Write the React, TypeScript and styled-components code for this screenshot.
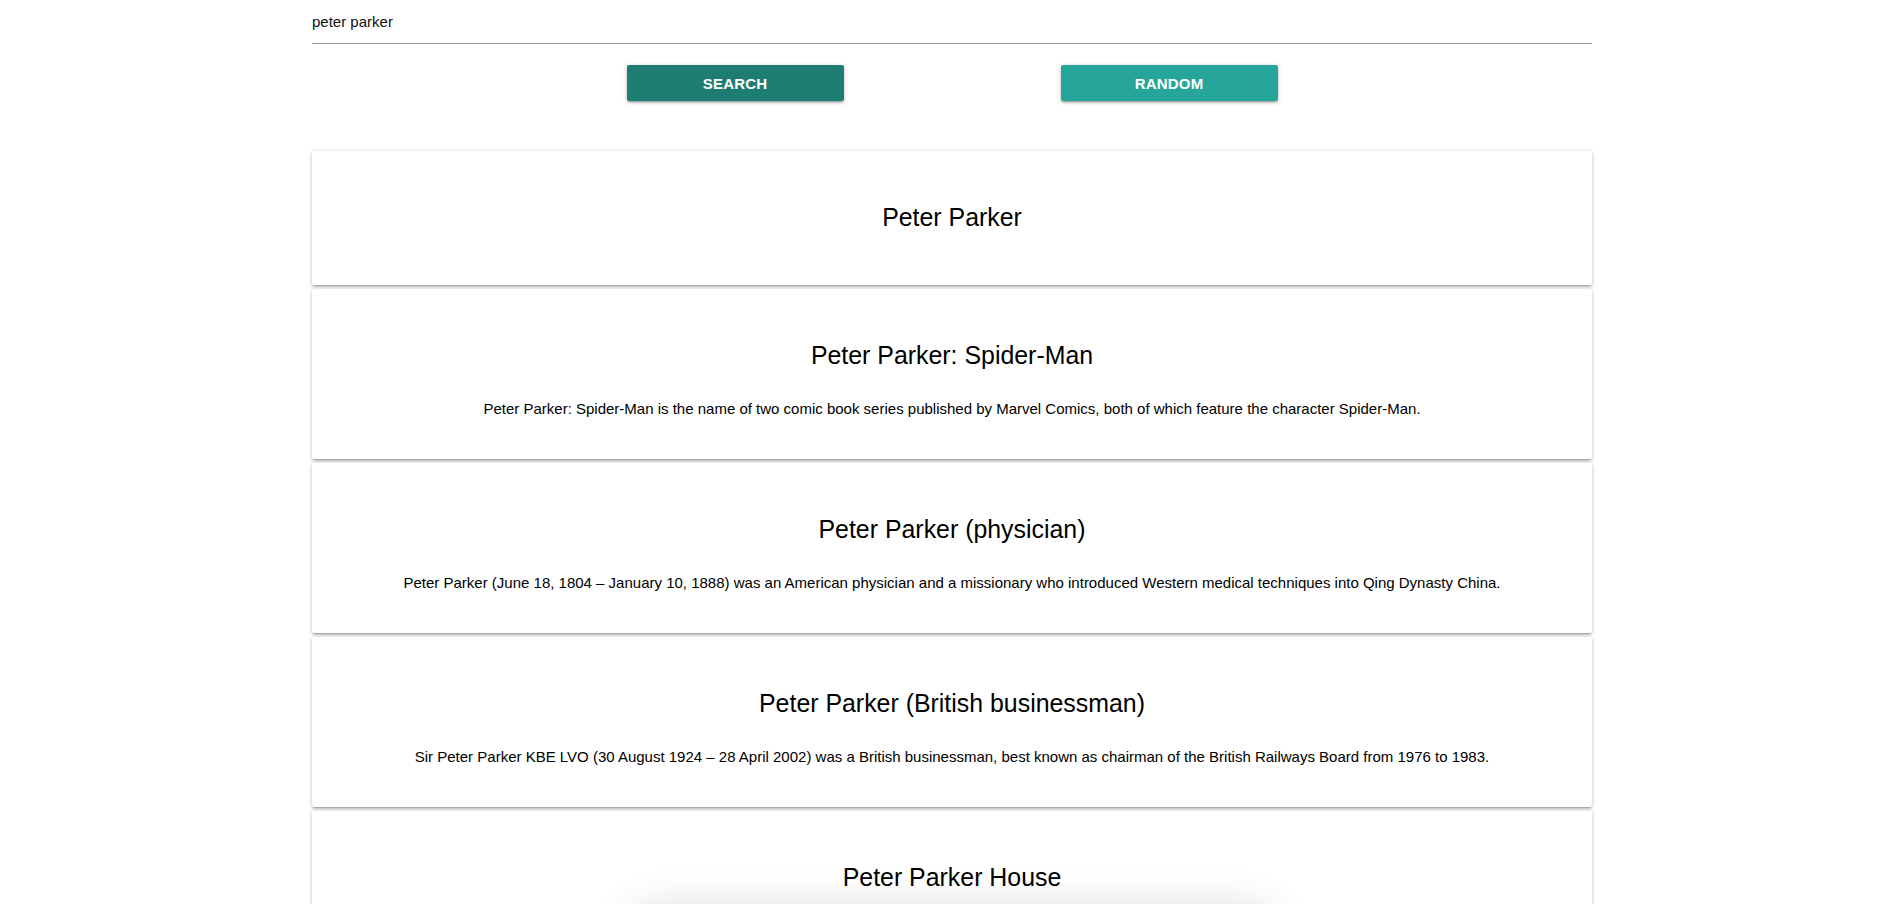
import React from "react";
import styled, { createGlobalStyle } from "styled-components";

const Global = createGlobalStyle`
  html { font-size: 15px; }
  body {
    margin: 0;
    background: #fff;
    font-family: "Liberation Sans", Arial, Helvetica, sans-serif;
    color: #000;
  }
`;

const Container = styled.div`
  width: 1280px;
  margin: 0 auto;
`;

const SearchInput = styled.input`
  display: block;
  box-sizing: content-box;
  width: 100%;
  height: 43px;
  padding: 0;
  margin: 0;
  border: none;
  border-bottom: 1px solid #9e9e9e;
  outline: none;
  background: transparent;
  font-family: inherit;
  font-size: 15px;
  color: #111;
`;

const ButtonRow = styled.div`
  display: flex;
  justify-content: center;
  gap: 217px;
  margin: 21px 0 50px;
`;

const Button = styled.button<{ $tone: "dark" | "light" }>`
  width: 217px;
  height: 36px;
  padding: 0;
  border: none;
  border-radius: 2px;
  background: ${(p) => (p.$tone === "dark" ? "#1e7d73" : "#26a69a")};
  color: #fff;
  font-family: inherit;
  font-size: 15px;
  font-weight: 700;
  letter-spacing: 0.2px;
  text-transform: uppercase;
  cursor: pointer;
  box-shadow: 0 2px 2px 0 rgba(0, 0, 0, 0.14), 0 3px 1px -2px rgba(0, 0, 0, 0.12),
    0 1px 5px 0 rgba(0, 0, 0, 0.2);
`;

const CardList = styled.div`
  display: flex;
  flex-direction: column;
  gap: 4px;
  padding-bottom: 40px;
`;

const Card = styled.div`
  background: #fff;
  border-radius: 2px;
  padding: 24px;
  text-align: center;
  box-shadow: 0 2px 2px 0 rgba(0, 0, 0, 0.14), 0 3px 1px -2px rgba(0, 0, 0, 0.12),
    0 1px 5px 0 rgba(0, 0, 0, 0.2);
`;

const Title = styled.h3`
  margin: 28px 0 30px;
  font-size: 24.9px;
  line-height: 28px;
  font-weight: 400;
`;

const Extract = styled.p`
  margin: 0 0 16px;
  font-size: 15px;
  line-height: 20px;
`;

const BottomShade = styled.div`
  position: fixed;
  left: 50%;
  bottom: -70px;
  width: 640px;
  height: 60px;
  transform: translateX(-50%);
  border-radius: 30px;
  background: rgba(255, 255, 255, 0.4);
  box-shadow: 0 0 40px 10px rgba(0, 0, 0, 0.12);
  pointer-events: none;
`;

const results = [
  { title: "Peter Parker", extract: "" },
  {
    title: "Peter Parker: Spider-Man",
    extract:
      "Peter Parker: Spider-Man is the name of two comic book series published by Marvel Comics, both of which feature the character Spider-Man.",
  },
  {
    title: "Peter Parker (physician)",
    extract:
      "Peter Parker (June 18, 1804 – January 10, 1888) was an American physician and a missionary who introduced Western medical techniques into Qing Dynasty China.",
  },
  {
    title: "Peter Parker (British businessman)",
    extract:
      "Sir Peter Parker KBE LVO (30 August 1924 – 28 April 2002) was a British businessman, best known as chairman of the British Railways Board from 1976 to 1983.",
  },
  {
    title: "Peter Parker House",
    extract:
      "The Peter Parker House is a historic house in Massachusetts, listed on the National Register of Historic Places.",
  },
];

export default function App() {
  return (
    <>
      <Global />
      <Container>
        <SearchInput defaultValue="peter parker" />
        <ButtonRow>
          <Button $tone="dark">Search</Button>
          <Button $tone="light">Random</Button>
        </ButtonRow>
        <CardList>
          {results.map((r) => (
            <Card key={r.title}>
              <Title>{r.title}</Title>
              {r.extract && <Extract>{r.extract}</Extract>}
            </Card>
          ))}
        </CardList>
      </Container>
      <BottomShade />
    </>
  );
}
